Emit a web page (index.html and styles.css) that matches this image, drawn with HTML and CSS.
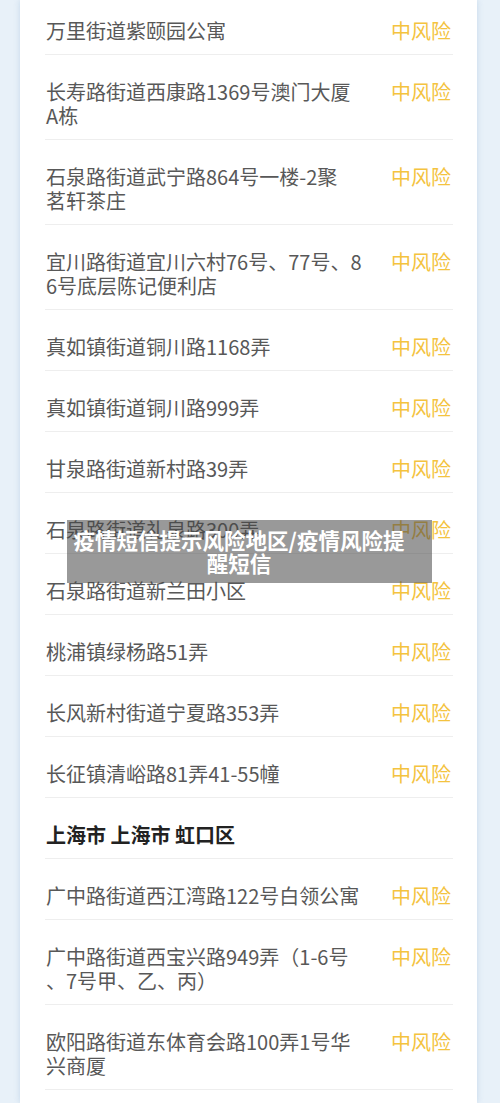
FILE: index.html
```html
<!DOCTYPE html>
<html lang="zh-CN">
<head>
<meta charset="utf-8">
<title>疫情短信提示风险地区</title>
<link rel="stylesheet" href="styles.css">
</head>
<body>
<div class="page">
  <div class="card">
    <div class="row first"><div class="addr">万里街道紫颐园公寓</div><div class="risk">中风险</div></div>
    <div class="row"><div class="addr">长寿路街道西康路1369号澳门大厦<br>A栋</div><div class="risk">中风险</div></div>
    <div class="row"><div class="addr">石泉路街道武宁路864号一楼-2聚<br>茗轩茶庄</div><div class="risk">中风险</div></div>
    <div class="row"><div class="addr">宜川路街道宜川六村76号、77号、8<br>6号底层陈记便利店</div><div class="risk">中风险</div></div>
    <div class="row"><div class="addr">真如镇街道铜川路1168弄</div><div class="risk">中风险</div></div>
    <div class="row"><div class="addr">真如镇街道铜川路999弄</div><div class="risk">中风险</div></div>
    <div class="row"><div class="addr">甘泉路街道新村路39弄</div><div class="risk">中风险</div></div>
    <div class="row"><div class="addr">石泉路街道礼泉路300弄</div><div class="risk">中风险</div></div>
    <div class="row"><div class="addr">石泉路街道新兰田小区</div><div class="risk">中风险</div></div>
    <div class="row"><div class="addr">桃浦镇绿杨路51弄</div><div class="risk">中风险</div></div>
    <div class="row"><div class="addr">长风新村街道宁夏路353弄</div><div class="risk">中风险</div></div>
    <div class="row"><div class="addr">长征镇清峪路81弄41-55幢</div><div class="risk">中风险</div></div>
    <div class="row header"><div class="city">上海市 上海市 虹口区</div></div>
    <div class="row"><div class="addr">广中路街道西江湾路122号白领公寓</div><div class="risk">中风险</div></div>
    <div class="row"><div class="addr">广中路街道西宝兴路949弄（1-6号<br>、7号甲、乙、丙）</div><div class="risk">中风险</div></div>
    <div class="row"><div class="addr">欧阳路街道东体育会路100弄1号华<br>兴商厦</div><div class="risk">中风险</div></div>
  </div>
  <div class="caption">疫情短信提示风险地区/疫情风险提<br>醒短信</div>
</div>
</body>
</html>
```
FILE: styles.css
```css
html, body {
  margin: 0;
  padding: 0;
}
body {
  background: #e8f1f9;
  font-family: "Noto Sans CJK SC", "Noto Sans", sans-serif;
  overflow: hidden;
}
.page {
  position: relative;
  height: 1103px;
  overflow: hidden;
}
.card {
  margin-left: 20px;
  width: 457px;
  min-height: 1103px;
  background: #ffffff;
  box-shadow: 0 0 6px rgba(150, 185, 215, 0.45);
  padding: 0 24px 0 25px;
  box-sizing: border-box;
}
.row {
  display: flex;
  justify-content: space-between;
  align-items: flex-start;
  padding: 25px 2px 11px 1px;
  border-bottom: 1px solid #eeeeee;
  font-size: 20px;
  line-height: 24px;
}
.row.first {
  padding-top: 19px;
}
.addr {
  width: 330px;
  color: #585858;
  white-space: nowrap;
}
.risk {
  color: #f4c33f;
  white-space: nowrap;
}
.city {
  color: #222222;
  font-weight: 700;
}
.caption {
  position: absolute;
  left: 67px;
  top: 520px;
  width: 365px;
  height: 63px;
  box-sizing: border-box;
  padding: 8px 21px 0 0;
  background: rgba(70, 70, 70, 0.55);
  color: #ffffff;
  font-size: 21.5px;
  font-weight: 700;
  line-height: 23px;
  text-align: center;
  white-space: nowrap;
}
```
